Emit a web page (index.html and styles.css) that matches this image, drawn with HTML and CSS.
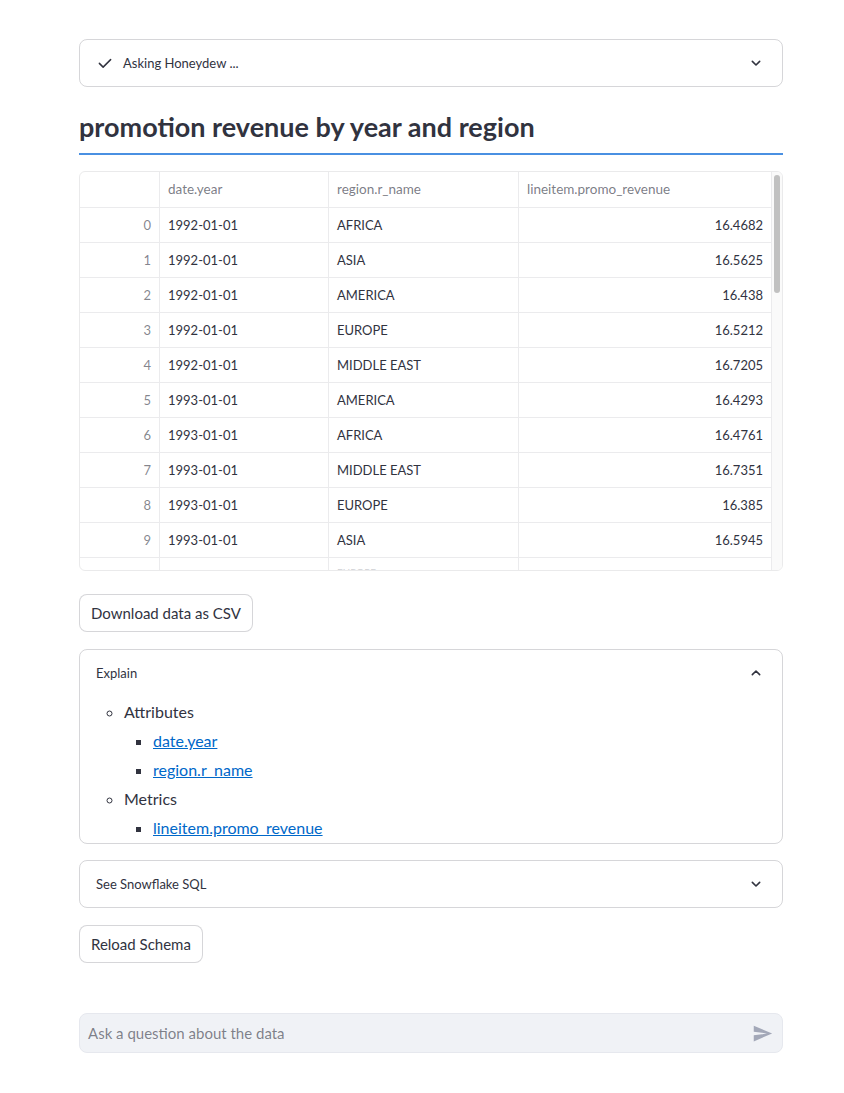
FILE: index.html
```html
<!DOCTYPE html>
<html>
<head>
<meta charset="utf-8">
<link rel="stylesheet" href="styles.css">
</head>
<body>
<main class="page">
  <details class="expander status">
    <summary class="exp-head">
      <span class="exp-title">
        <svg class="check" viewBox="0 0 24 24" width="18" height="18"><path d="M4.5 12.5l5 5L19.5 7.5" fill="none" stroke="#31333f" stroke-width="2" stroke-linecap="round" stroke-linejoin="round"/></svg>
        Asking Honeydew ...
      </span>
      <svg class="chev" viewBox="0 0 24 24" width="16" height="16"><path d="M6.5 9.5l5.5 5.5 5.5-5.5" fill="none" stroke="#31333f" stroke-width="2.4" stroke-linecap="round" stroke-linejoin="round"/></svg>
    </summary>
  </details>

  <h3 class="title">promotion revenue by year and region</h3>

  <div class="grid-wrap">
    <div class="grid">
      <div class="row head">
        <div class="c idx"></div>
        <div class="c c1">date.year</div>
        <div class="c c2">region.r_name</div>
        <div class="c c3">lineitem.promo_revenue</div>
      </div>
      <div class="row"><div class="c idx">0</div><div class="c c1">1992-01-01</div><div class="c c2">AFRICA</div><div class="c c3 num">16.4682</div></div>
      <div class="row"><div class="c idx">1</div><div class="c c1">1992-01-01</div><div class="c c2">ASIA</div><div class="c c3 num">16.5625</div></div>
      <div class="row"><div class="c idx">2</div><div class="c c1">1992-01-01</div><div class="c c2">AMERICA</div><div class="c c3 num">16.438</div></div>
      <div class="row"><div class="c idx">3</div><div class="c c1">1992-01-01</div><div class="c c2">EUROPE</div><div class="c c3 num">16.5212</div></div>
      <div class="row"><div class="c idx">4</div><div class="c c1">1992-01-01</div><div class="c c2">MIDDLE EAST</div><div class="c c3 num">16.7205</div></div>
      <div class="row"><div class="c idx">5</div><div class="c c1">1993-01-01</div><div class="c c2">AMERICA</div><div class="c c3 num">16.4293</div></div>
      <div class="row"><div class="c idx">6</div><div class="c c1">1993-01-01</div><div class="c c2">AFRICA</div><div class="c c3 num">16.4761</div></div>
      <div class="row"><div class="c idx">7</div><div class="c c1">1993-01-01</div><div class="c c2">MIDDLE EAST</div><div class="c c3 num">16.7351</div></div>
      <div class="row"><div class="c idx">8</div><div class="c c1">1993-01-01</div><div class="c c2">EUROPE</div><div class="c c3 num">16.385</div></div>
      <div class="row"><div class="c idx">9</div><div class="c c1">1993-01-01</div><div class="c c2">ASIA</div><div class="c c3 num">16.5945</div></div>
      <div class="row partial"><div class="c idx"></div><div class="c c1"></div><div class="c c2"><span class="fade">EUROPE</span></div><div class="c c3 num"></div></div>
    </div>
    <div class="scrollbar"><div class="thumb"></div></div>
  </div>

  <button class="btn dl">Download data as CSV</button>

  <details class="expander explain" open>
    <summary class="exp-head">
      <span class="exp-title">Explain</span>
      <svg class="chev" viewBox="0 0 24 24" width="16" height="16"><path d="M6.5 14.5l5.5-5.5 5.5 5.5" fill="none" stroke="#31333f" stroke-width="2.4" stroke-linecap="round" stroke-linejoin="round"/></svg>
    </summary>
    <div class="exp-body">
      <ul class="l1">
        <li>Attributes
          <ul class="l2">
            <li><a href="#">date.year</a></li>
            <li><a href="#">region.r_name</a></li>
          </ul>
        </li>
        <li>Metrics
          <ul class="l2">
            <li><a href="#">lineitem.promo_revenue</a></li>
          </ul>
        </li>
      </ul>
    </div>
  </details>

  <details class="expander sql">
    <summary class="exp-head">
      <span class="exp-title">See Snowflake SQL</span>
      <svg class="chev" viewBox="0 0 24 24" width="16" height="16"><path d="M6.5 9.5l5.5 5.5 5.5-5.5" fill="none" stroke="#31333f" stroke-width="2.4" stroke-linecap="round" stroke-linejoin="round"/></svg>
    </summary>
  </details>

  <button class="btn reload">Reload Schema</button>

  <div class="chat">
    <span class="placeholder">Ask a question about the data</span>
    <svg class="send" viewBox="0 0 24 24" width="21" height="21"><path d="M2.01 21L23 12 2.01 3 2 10l15 2-15 2z" fill="#a3a8b8"/></svg>
  </div>
</main>
</body>
</html>
```
FILE: styles.css
```css
* { box-sizing: border-box; }
html, body { margin: 0; padding: 0; background: #fff; }
body {
  font-family: "Source Sans Pro", "Lato", "Noto Sans", sans-serif;
  color: #31333f;
}
.page {
  width: 704px;
  margin-left: 79px;
  padding-top: 39px;
  display: flex;
  flex-direction: column;
}
.expander {
  border: 1px solid rgba(49, 51, 63, 0.2);
  border-radius: 8px;
}
.exp-head {
  list-style: none;
  height: 46px;
  display: flex;
  align-items: center;
  justify-content: space-between;
  padding: 0 18px 0 16px;
  font-size: 13px;
  cursor: pointer;
}
.exp-head::-webkit-details-marker { display: none; }
.exp-title { display: flex; align-items: center; gap: 9px; }
.chev { display: block; }

.title {
  margin: 23px 0 0;
  font-size: 27px;
  font-weight: 700;
  line-height: 34px;
  padding-bottom: 9px;
  border-bottom: 2px solid #4a90e2;
}

.grid-wrap {
  margin-top: 16px;
  position: relative;
  height: 400px;
  border: 1px solid rgba(49, 51, 63, 0.1);
  border-radius: 6px;
  overflow: hidden;
}
.grid {
  width: 693px;
  font-size: 13px;
}
.row {
  display: flex;
  height: 35px;
  border-bottom: 1px solid #ebebed;
}
.row.head { height: 36px; color: rgba(49, 51, 63, 0.65); font-size: 13.5px; }
.c {
  display: flex;
  align-items: center;
  padding: 0 8px 1px;
  border-right: 1px solid #ebebed;
  white-space: nowrap;
}
.idx { width: 80px; justify-content: flex-end; color: rgba(49, 51, 63, 0.6); padding-right: 8px; }
.c1 { width: 169px; }
.c2 { width: 190px; }
.c3 { width: 254px; border-right: none; }
.num { justify-content: flex-end; padding-right: 10px; }
.partial { height: 13px; border-bottom: none; overflow: hidden; }
.partial .c { align-items: flex-end; padding-bottom: 0; }
.fade { color: #d0d1d5; font-size: 10px; line-height: 10px; margin-bottom: -6px; }
.scrollbar {
  position: absolute;
  top: 0;
  right: 0;
  width: 11px;
  height: 100%;
  border-left: 1px solid #ebebed;
  background: #fafafa;
}
.thumb {
  margin: 3px 0 0 2px;
  width: 6px;
  height: 118px;
  border-radius: 3px;
  background: #c1c1c1;
}

.btn {
  align-self: flex-start;
  font-family: inherit;
  font-size: 15px;
  color: #31333f;
  background: #fff;
  border: 1px solid rgba(49, 51, 63, 0.2);
  border-radius: 8px;
  height: 38px;
  padding: 0 11px;
}
.dl { margin-top: 23px; }

.explain { margin-top: 17px; }
.exp-body {
  padding: 0 16px 1px;
  font-size: 16px;
}
.exp-body ul { margin: 0; }
.l1 {
  padding-left: 28px;
  list-style-type: circle;
}
.l1 > li { line-height: 29px; }
.l1 > li:first-child { margin-top: 1px; }
.l2 {
  padding-left: 29px;
  list-style-type: square;
}
.l2 li { line-height: 29px; }
a { color: #0068c9; }

.sql { margin-top: 16px; }
.reload { margin-top: 17px; }

.chat {
  margin-top: 50px;
  height: 40px;
  background: #f0f2f6;
  border: 1px solid #e6e8ee;
  border-radius: 8px;
  display: flex;
  align-items: center;
  justify-content: space-between;
  padding: 0 9px 0 8px;
}
.placeholder { font-size: 15px; color: rgba(49, 51, 63, 0.6); }
.send { display: block; }
```
